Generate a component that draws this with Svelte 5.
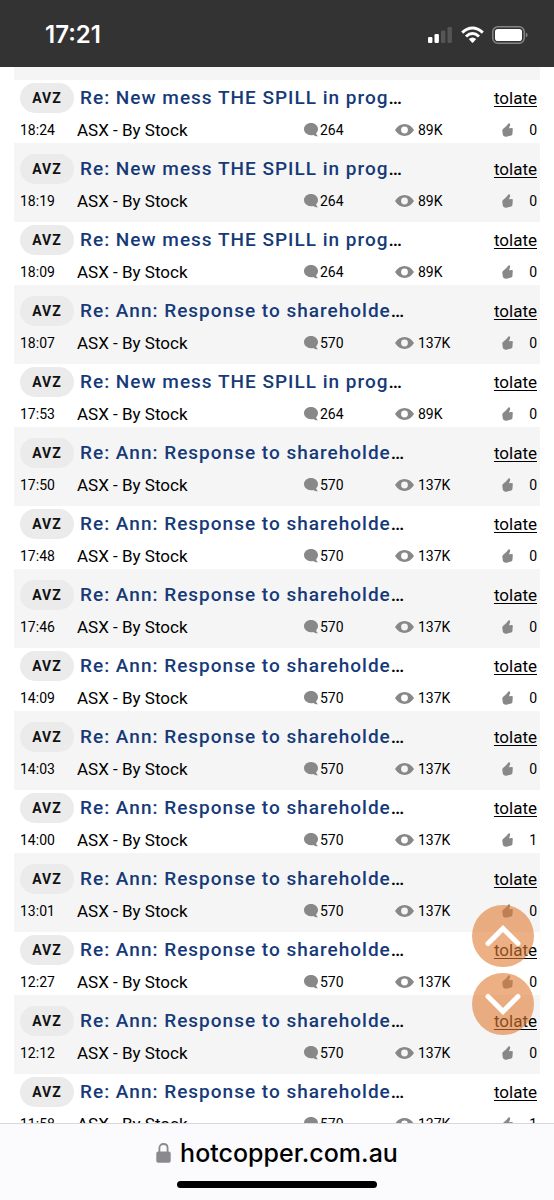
<script>
  const spill = 'Re: New mess THE SPILL in prog';
  const ann = 'Re: Ann: Response to shareholde';

  const make = (time, title, likes = 0) => ({
    time,
    title,
    likes,
    comments: title === spill ? '264' : '570',
    views: title === spill ? '89K' : '137K',
  });

  const posts = [
    make('18:24', spill),
    make('18:19', spill),
    make('18:09', spill),
    make('18:07', ann),
    make('17:53', spill),
    make('17:50', ann),
    make('17:48', ann),
    make('17:46', ann),
    make('14:09', ann),
    make('14:03', ann),
    make('14:00', ann, 1),
    make('13:01', ann),
    make('12:27', ann),
    make('12:12', ann),
    make('11:58', ann, 1),
  ];
</script>

<div class="screen">
  <header class="status">
    <time class="clock">17:21</time>
    <div class="signals">
      <svg width="25" height="18" viewBox="0 0 25 18" aria-hidden="true">
        <rect x="0" y="11" width="4.4" height="6" rx="1.2" fill="#fff" />
        <rect x="6.5" y="8" width="4.4" height="9" rx="1.2" fill="#fff" />
        <rect x="13" y="4.5" width="4.4" height="12.5" rx="1.2" fill="#555" />
        <rect x="19.5" y="1" width="4.4" height="16" rx="1.2" fill="#555" />
      </svg>
      <svg width="23" height="18" viewBox="0 0 23 18" aria-hidden="true">
        <g fill="none" stroke="#fff" stroke-width="3">
          <path d="M1.2 6.6Q11.5-2.6 21.8 6.6" />
          <path d="M5 10.5Q11.5 4.6 18 10.5" />
        </g>
        <path d="M7.8 13Q11.500 9.800 15.200 13L12.100 16.400Q11.500 17 10.900 16.400Z" fill="#fff" />
      </svg>
      <svg width="36" height="18" viewBox="0 0 36 18" aria-hidden="true">
        <rect x="0.8" y="0.8" width="31.4" height="16.4" rx="5" fill="none" stroke="#858585" stroke-width="1.5" />
        <rect x="3" y="3" width="27" height="12" rx="2.8" fill="#fff" />
        <path d="M33.8 6.5Q35.6 7.400 35.6 9T33.8 11.5Z" fill="#858585" />
      </svg>
    </div>
  </header>

  <main class="feed">
    <ul class="posts">
      {#each posts as post}
        <li class="post">
          <div class="head">
            <a class="tag" href="#avz">AVZ</a>
            <span class="title"><a href="#thread">{post.title}</a>…</span>
            <a class="author" href="#tolate">tolate</a>
          </div>
          <div class="meta">
            <time>{post.time}</time>
            <span class="forum">ASX - By Stock</span>
            <span class="stat">
              <svg width="16" height="14" viewBox="0 0 16 14" aria-hidden="true">
                <path d="M7 0C11 0 14 2.6 14 6.1C14 7.800 13.400 9.200 12.200 10.300C12.400 11.700 13 12.500 14 13.200C12.200 13.400 10.600 12.900 9.300 11.900C8.600 12.100 7.800 12.200 7 12.200C3 12.200 0 9.600 0 6.100S3 0 7 0Z" fill="#888" />
              </svg>
              {post.comments}
            </span>
            <span class="stat views">
              <svg width="19" height="12" viewBox="0 0 19 12" aria-hidden="true">
                <path fill-rule="evenodd" d="M0 6C2.400 2.100 5.600 0 9.500 0S16.600 2.100 19 6C16.600 9.900 13.400 12 9.500 12S2.400 9.900 0 6ZM9.500 2.600A3.400 3.400 0 1 0 9.500 9.400A3.400 3.400 0 1 0 9.500 2.600Z" fill="#888" />
              </svg>
              {post.views}
            </span>
            <span class="likes">
              <svg width="11" height="14" viewBox="0 0 11 14" aria-hidden="true">
                <path d="M7.300 0.300C8.300 0.600 8.300 1.500 8 2.500L7 5.300L10 5.100Q10.800 5.200 10.800 6L10.400 11.200Q10.200 12.200 9.200 12.500L4.500 13.700Q2.900 14 1.500 12.800Q0.900 12.300 0.800 11.500L0.300 7.700Q0.200 6.700 1 6Q4.500 3.500 6.200 0.800Q6.600 0.100 7.300 0.300Z" fill="#888" />
              </svg>
              {post.likes}
            </span>
          </div>
        </li>
      {/each}
    </ul>

    <div class="jump">
      <button type="button" aria-label="Scroll up">
        <svg width="36" height="22" viewBox="0 0 36 22" aria-hidden="true"><path d="M3 18.500L18 3.500L33 18.500" /></svg>
      </button>
      <button type="button" aria-label="Scroll down">
        <svg width="36" height="22" viewBox="0 0 36 22" aria-hidden="true"><path d="M3 3.500L18 18.500L33 3.500" /></svg>
      </button>
    </div>
  </main>

  <footer class="browser">
    <div class="address">
      <svg width="15" height="20" viewBox="0 0 15 20" aria-hidden="true">
        <path d="M3.400 9V5.200C3.400 2.600 5.100 1 7.500 1S11.600 2.600 11.600 5.200V9" fill="none" stroke="#8a8a8e" stroke-width="1.800" />
        <rect x="0.300" y="8.500" width="14.400" height="11.300" rx="2" fill="#8a8a8e" />
      </svg>
      <span>hotcopper.com.au</span>
    </div>
    <div class="home"></div>
  </footer>
</div>

<style>
  :global(body) {
    margin: 0;
  }
  .screen {
    display: flex;
    flex-direction: column;
    height: 100vh;
    overflow: hidden;
    background: #fff;
    color: #000;
    font-family: Roboto, sans-serif;
  }
  .status {
    flex: none;
    display: flex;
    align-items: center;
    justify-content: space-between;
    box-sizing: border-box;
    height: 67px;
    padding: 3px 26px 0 45px;
    background: #333;
    color: #fff;
  }
  .clock {
    font: 600 24px/28px Inter, sans-serif;
  }
  .signals {
    display: flex;
    align-items: center;
    gap: 8px;
  }
  .feed {
    position: relative;
    flex: 1;
    min-height: 0;
    overflow: hidden;
  }
  .posts {
    margin: 0 14px;
    padding: 0;
    border-top: 13px solid #f5f5f5;
    list-style: none;
  }
  .post {
    height: 60px;
    padding: 3px 3px 0 6px;
  }
  .post:nth-child(even) {
    height: 68px;
    padding-top: 11px;
    background: #f5f5f5;
  }
  .head {
    display: flex;
    align-items: center;
    height: 30px;
  }
  .tag {
    display: flex;
    align-items: center;
    justify-content: center;
    width: 54px;
    height: 30px;
    margin-right: 6px;
    border-radius: 15px;
    background: #ebebeb;
    color: #111;
    font-size: 14px;
    font-weight: 700;
    letter-spacing: 1px;
    text-decoration: none;
  }
  .title {
    flex: 1;
    font-size: 19px;
    font-weight: 500;
    line-height: 28px;
    letter-spacing: 1px;
    white-space: nowrap;
  }
  .title a {
    color: #163a78;
    text-decoration: none;
  }
  .author {
    color: #000;
    font-size: 17px;
    line-height: 28px;
    text-underline-offset: 2px;
  }
  .meta {
    display: grid;
    grid-template-columns: 57px 1fr 91px 107px 35px;
    align-items: center;
    height: 33px;
    font-size: 14px;
  }
  .forum {
    font-size: 17px;
  }
  .stat {
    display: flex;
    align-items: center;
  }
  .views {
    gap: 4px;
  }
  .likes {
    display: flex;
    align-items: center;
    justify-content: space-between;
  }
  .jump {
    position: absolute;
    right: 20px;
    bottom: 88px;
    display: grid;
    gap: 6px;
  }
  .jump button {
    display: flex;
    align-items: center;
    justify-content: center;
    width: 62px;
    height: 62px;
    padding: 0;
    border: 0;
    border-radius: 50%;
    background: rgba(223, 123, 50, 0.6);
  }
  .jump path {
    fill: none;
    stroke: #fff;
    stroke-width: 5;
    stroke-linecap: round;
  }
  .browser {
    flex: none;
    display: flex;
    flex-direction: column;
    align-items: center;
    justify-content: space-between;
    box-sizing: border-box;
    height: 77px;
    padding: 14px 0 12px;
    border-top: 1px solid #d8d8da;
    background: #fbfbfd;
    color: #000;
  }
  .address {
    display: flex;
    align-items: center;
    gap: 9px;
    font: 500 25px/30px Inter, sans-serif;
  }
  .home {
    width: 36%;
    height: 7px;
    border-radius: 4px;
    background: #000;
  }
</style>
